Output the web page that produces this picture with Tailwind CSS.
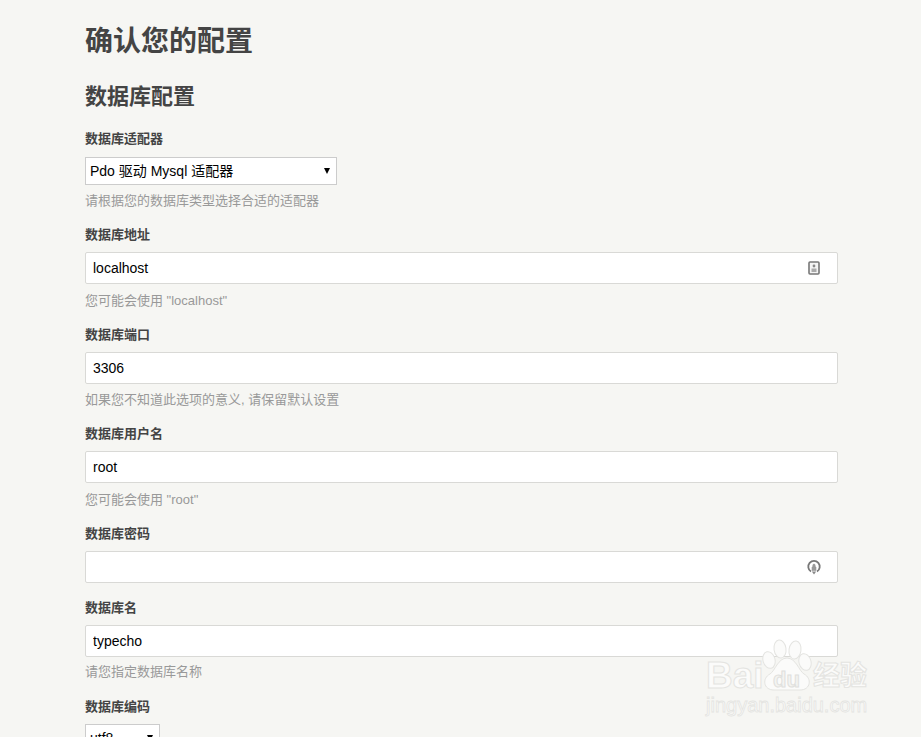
<!DOCTYPE html>
<html lang="zh-CN">
<head>
    <meta charset="UTF-8">
    <title>确认您的配置</title>
    <script src="https://cdn.jsdelivr.net/npm/@tailwindcss/browser@4"></script>
</head>
<body class="relative h-screen overflow-hidden bg-[#f6f6f3] text-[#444] font-['Liberation_Sans','Noto_Sans_CJK_SC',sans-serif]">
    <div class="ml-[85px] w-[753px]">
        <h1 class="pt-[23px] text-[28px] leading-[38px] font-bold">确认您的配置</h1>
        <h2 class="mt-[21px] text-[22px] leading-[30px] font-bold">数据库配置</h2>

        <!-- 适配器 -->
        <label class="mt-[17px] block text-[13px] leading-[20px] font-bold">数据库适配器</label>
        <div class="relative mt-[8px] w-[252px]">
            <select class="block h-[28px] w-full appearance-none rounded-none border border-[#ccc] bg-white pl-[4px] text-[14px] text-black">
                <option>Pdo 驱动 Mysql 适配器</option>
            </select>
            <span class="absolute right-[7px] top-[11px] h-0 w-0 border-x-[3px] border-t-[6px] border-x-transparent border-t-black"></span>
        </div>
        <p class="mt-[6px] text-[13px] leading-[20px] text-[#999]">请根据您的数据库类型选择合适的适配器</p>

        <!-- 地址 -->
        <label class="mt-[14px] block text-[13px] leading-[20px] font-bold">数据库地址</label>
        <div class="relative mt-[7px]">
            <input value="localhost" class="block h-[32px] w-full rounded-[2px] border border-[#d9d9d6] bg-white px-[7px] text-[14px] text-black">
            <svg class="absolute right-[18px] top-[9px] h-[14px] w-[12px]" viewBox="0 0 12 14">
                <rect x="1" y="1" width="10" height="12" rx="1" fill="#f4f4f4" stroke="#777" stroke-width="1.6"/>
                <circle cx="6" cy="5" r="1.4" fill="#888"/>
                <rect x="3.5" y="7.5" width="5" height="3.5" fill="#aaa"/>
            </svg>
        </div>
        <p class="mt-[7px] text-[13px] leading-[20px] text-[#999]">您可能会使用 "localhost"</p>

        <!-- 端口 -->
        <label class="mt-[14px] block text-[13px] leading-[20px] font-bold">数据库端口</label>
        <input value="3306" class="mt-[7px] block h-[32px] w-full rounded-[2px] border border-[#d9d9d6] bg-white px-[7px] text-[14px] text-black">
        <p class="mt-[6px] text-[13px] leading-[20px] text-[#999]">如果您不知道此选项的意义, 请保留默认设置</p>

        <!-- 用户名 -->
        <label class="mt-[14px] block text-[13px] leading-[20px] font-bold">数据库用户名</label>
        <input value="root" class="mt-[7px] block h-[32px] w-full rounded-[2px] border border-[#d9d9d6] bg-white px-[7px] text-[14px] text-black">
        <p class="mt-[7px] text-[13px] leading-[20px] text-[#999]">您可能会使用 "root"</p>

        <!-- 密码 -->
        <label class="mt-[14px] block text-[13px] leading-[20px] font-bold">数据库密码</label>
        <div class="relative mt-[7px]">
            <input class="block h-[32px] w-full rounded-[2px] border border-[#d9d9d6] bg-white px-[7px] text-[14px] text-black">
            <svg class="absolute right-[17px] top-[8px] h-[16px] w-[14px]" viewBox="0 0 14 16">
                <path d="M4 12.5A5.7 5.7 0 1 1 10 12.5" fill="none" stroke="#777" stroke-width="1.8"/>
                <path d="M5 8h4v3.5H5zM5.8 8V6.3a1.2 1.2 0 0 1 2.4 0V8" fill="#999" stroke="#999" stroke-width=".6"/>
                <path d="M4.8 12.5h4.4L7 15.5z" fill="#888"/>
            </svg>
        </div>

        <!-- 数据库名 -->
        <label class="mt-[15px] block text-[13px] leading-[20px] font-bold">数据库名</label>
        <input value="typecho" class="mt-[7px] block h-[32px] w-full rounded-[2px] border border-[#d9d9d6] bg-white px-[7px] text-[14px] text-black">
        <p class="mt-[5px] text-[13px] leading-[20px] text-[#999]">请您指定数据库名称</p>

        <!-- 编码 -->
        <label class="mt-[15px] block text-[13px] leading-[20px] font-bold">数据库编码</label>
        <div class="relative mt-[7px] w-[75px]">
            <select class="block h-[28px] w-full appearance-none rounded-none border border-[#ccc] bg-white pl-[4px] text-[14px] text-black">
                <option>utf8</option>
            </select>
            <span class="absolute right-[7px] top-[11px] h-0 w-0 border-x-[3px] border-t-[6px] border-x-transparent border-t-black"></span>
        </div>
    </div>

    <!-- 水印 -->
    <div class="absolute left-[706px] top-[638px] h-[82px] w-[170px]">
        <svg class="absolute left-[54px] top-0 h-[56px] w-[52px]" viewBox="0 0 52 56">
            <g fill="#fbfbfa" stroke="#e4e4e1" stroke-width="1">
                <ellipse cx="9" cy="22" rx="6" ry="8.5" transform="rotate(-15 9 22)"/>
                <ellipse cx="20" cy="11" rx="6" ry="9" transform="rotate(-8 20 11)"/>
                <ellipse cx="35" cy="12" rx="6" ry="9" transform="rotate(8 35 12)"/>
                <ellipse cx="45" cy="24" rx="6" ry="8.5" transform="rotate(-15 45 24)"/>
                <path d="M14 52C3 52 2 40 10 36C15 33 18 20 27 20C36 20 39 33 44 36C52 40 51 52 40 52Z"/>
            </g>
        </svg>
        <span class="absolute left-0 top-[23px] text-[37px] leading-[30px] font-bold text-[#fbfbfa] [-webkit-text-stroke:1px_#e4e4e1]">Bai</span>
        <span class="absolute left-[67px] top-[30px] text-[22px] leading-[24px] font-bold text-[#f4f4f1] [-webkit-text-stroke:1px_#e0e0dd]">du</span>
        <span class="absolute left-[107px] top-[23px] text-[27px] leading-[30px] font-bold text-[#fbfbfa] [-webkit-text-stroke:1px_#e4e4e1]">经验</span>
        <span class="absolute left-0 top-[56px] text-[20px] leading-[22px] text-[#fbfbfa] [-webkit-text-stroke:0.8px_#e4e4e1]">jingyan.baidu.com</span>
    </div>
</body>
</html>
